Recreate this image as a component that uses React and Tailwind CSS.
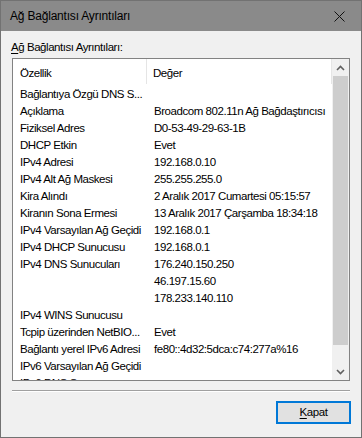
import React from 'react';

const rows = [
  ['Bağlantıya Özgü DNS S...', ''],
  ['Açıklama', 'Broadcom 802.11n Ağ Bağdaştırıcısı'],
  ['Fiziksel Adres', 'D0-53-49-29-63-1B'],
  ['DHCP Etkin', 'Evet'],
  ['IPv4 Adresi', '192.168.0.10'],
  ['IPv4 Alt Ağ Maskesi', '255.255.255.0'],
  ['Kira Alındı', '2 Aralık 2017 Cumartesi 05:15:57'],
  ['Kiranın Sona Ermesi', '13 Aralık 2017 Çarşamba 18:34:18'],
  ['IPv4 Varsayılan Ağ Geçidi', '192.168.0.1'],
  ['IPv4 DHCP Sunucusu', '192.168.0.1'],
  ['IPv4 DNS Sunucuları', '176.240.150.250'],
  ['', '46.197.15.60'],
  ['', '178.233.140.110'],
  ['IPv4 WINS Sunucusu', ''],
  ['Tcpip üzerinden NetBIO...', 'Evet'],
  ['Bağlantı yerel IPv6 Adresi', 'fe80::4d32:5dca:c74:277a%16'],
  ['IPv6 Varsayılan Ağ Geçidi', ''],
  ['IPv6 DNS Sunucusu', ''],
];

function Chevron({ down }) {
  return (
    <svg width="9" height="6" viewBox="0 0 9 6" className={down ? 'rotate-180' : ''}>
      <path d="M1 5 L4.5 1.5 L8 5" fill="none" stroke="#606060" strokeWidth="1.6" />
    </svg>
  );
}

export default function App() {
  return (
    <div className="w-[362px] h-[438px] border border-[#727272] flex flex-col font-['Liberation_Sans',Arial,sans-serif] text-[11.5px] tracking-[-0.45px] text-black leading-[15px]">
      {/* title bar */}
      <div className="h-[30px] bg-[#8a8a8a] flex items-center justify-between pl-[9px] pr-[16px] shrink-0">
        <span className="text-[12px] tracking-[-0.2px]">Ağ Bağlantısı Ayrıntıları</span>
        <svg width="11" height="11" viewBox="0 0 11 11">
          <path d="M0.5 0.5 L10.5 10.5 M10.5 0.5 L0.5 10.5" stroke="#111" strokeWidth="1" />
        </svg>
      </div>

      <div className="flex-1 bg-[#f0f0f0] px-[11px] pt-[9px] flex flex-col">
        <div className="-ml-[1px]">
          <span className="underline underline-offset-2">A</span>ğ Bağlantısı Ayrıntıları:
        </div>

        {/* list box */}
        <div className="mt-[3px] h-[323px] border border-[#828282] bg-white flex overflow-hidden">
          <div className="flex-1 flex flex-col overflow-hidden">
            <div className="h-[27px] shrink-0 flex">
              <div className="w-[134px] shrink-0 pl-[7px] pt-[7px] border-r border-[#e5e5e5] mb-[2px]">Özellik</div>
              <div className="flex-1 pl-[6px] pt-[7px] border-r border-[#e5e5e5] mb-[2px]">Değer</div>
            </div>
            {rows.map(([k, v], i) => (
              <div key={i} className="h-[17px] shrink-0 flex items-center whitespace-nowrap">
                <div className="w-[134px] shrink-0 pl-[7px] overflow-hidden">{k}</div>
                <div className="flex-1 pl-[7px]">{v}</div>
              </div>
            ))}
          </div>

          {/* scrollbar */}
          <div className="w-[17px] bg-[#f0f0f0] flex flex-col shrink-0">
            <div className="h-[17px] flex items-center justify-center">
              <Chevron />
            </div>
            <div className="flex-1 flex flex-col">
              <div className="h-[269px] mx-[1px] bg-[#cdcdcd]" />
            </div>
            <div className="h-[17px] flex items-center justify-center">
              <Chevron down />
            </div>
          </div>
        </div>

        <div className="mt-[9px] border-t border-[#a0a0a0] border-b border-b-white" />

        <div className="flex justify-end mt-[9px] -mr-[1px]">
          <button className="w-[75px] h-[23px] bg-[#e1e1e1] border-2 border-[#0078d7] flex items-center justify-center">
            <span><span className="underline underline-offset-2">K</span>apat</span>
          </button>
        </div>
      </div>
    </div>
  );
}
